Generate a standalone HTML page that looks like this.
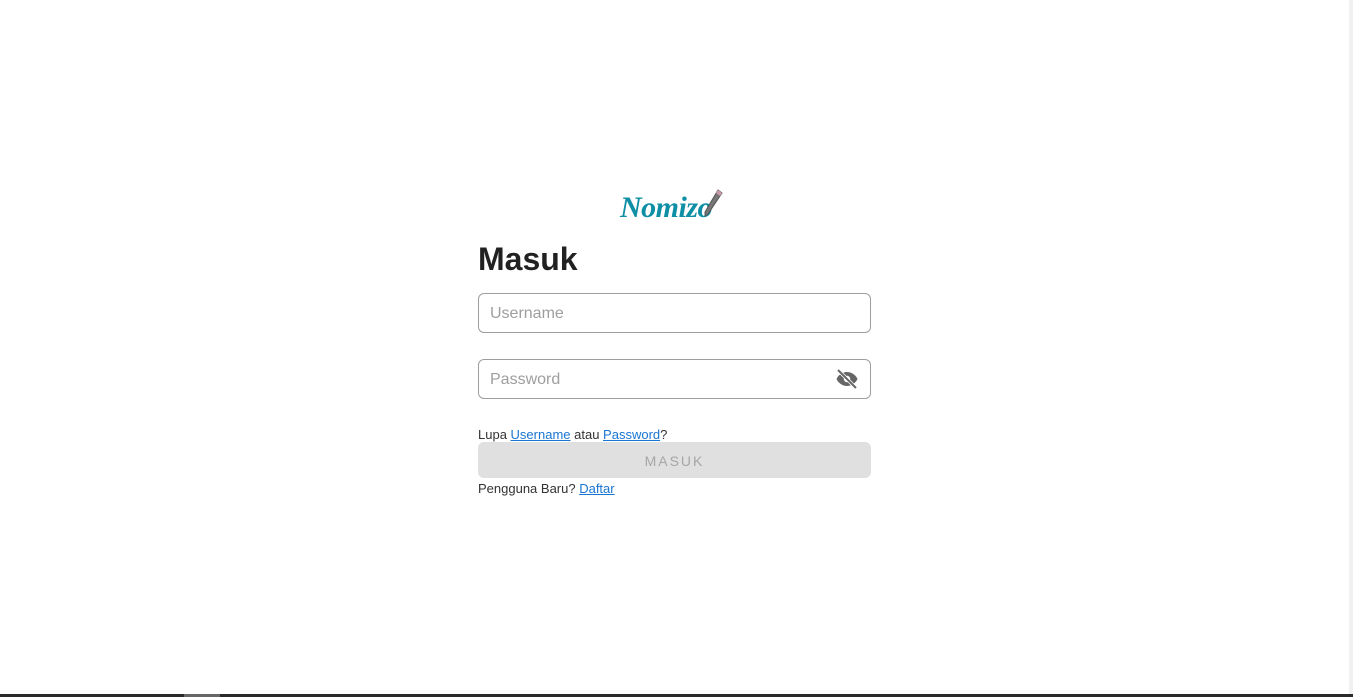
<!DOCTYPE html>
<html><head><meta charset="utf-8"><style>
html,body{margin:0;padding:0;width:1353px;height:697px;overflow:hidden;background:#fff;font-family:"Liberation Sans",sans-serif;position:relative}
.sb{position:absolute;right:0;top:0;width:4px;height:695px;background:#f1f1f1}
.bb{position:absolute;left:0;bottom:0;width:1353px;height:3px;background:#2a2a2a}
.bb2{position:absolute;left:184px;bottom:0;width:36px;height:3px;background:#666}
.logo{position:absolute;left:620px;top:191px;font-family:"Liberation Serif",serif;font-style:italic;font-weight:bold;font-size:30px;color:#0f8fa6;letter-spacing:-0.5px}
h1{position:absolute;left:478px;top:241px;margin:0;font-size:32px;font-weight:bold;color:#212121}
.in{position:absolute;left:478px;width:391px;height:38px;border:1px solid #9e9e9e;border-radius:6px;box-sizing:content-box}
.in span{position:absolute;left:11px;top:11px;font-size:16px;color:#9e9e9e}
.t{position:absolute;left:478px;font-size:13px;color:#333}
.t a{color:#1976d2;text-decoration:underline}
.btn{position:absolute;left:478px;top:442px;width:393px;height:36px;background:#e0e0e0;border-radius:6px;text-align:center;line-height:38px;font-size:14px;letter-spacing:2px;color:#a6a6a6}
</style></head><body>
<div class="sb"></div><div class="bb"></div><div class="bb2"></div>
<div class="logo">Nomizo</div>
<svg style="position:absolute;left:700px;top:188px" width="24" height="32" viewBox="0 0 24 32"><path d="M18 2 L22 5 L8 26 L5 28 L5 24 Z" fill="#777" stroke="#555" stroke-width="1"/><path d="M18 2 L22 5 L20 8 L16 5Z" fill="#c9a"/></svg>
<h1>Masuk</h1>
<div class="in" style="top:293px"><span>Username</span></div>
<div class="in" style="top:359px"><span>Password</span>
<svg style="position:absolute;left:356px;top:7px" width="24" height="24" viewBox="0 0 24 24"><path d="M12 5C7 5 3 8.5 1.5 12 3 15.5 7 19 12 19s9-3.5 10.5-7C21 8.5 17 5 12 5z" fill="#666"/><circle cx="12" cy="12" r="3.2" fill="#fff"/><path d="M3 3 L21 21" stroke="#fff" stroke-width="3.5"/><path d="M3 3 L21 21" stroke="#666" stroke-width="2"/></svg></div>
<div class="t" style="top:427px">Lupa <a>Username</a> atau <a>Password</a>?</div>
<div class="btn">MASUK</div>
<div class="t" style="top:481px">Pengguna Baru? <a>Daftar</a></div>
</body></html>
